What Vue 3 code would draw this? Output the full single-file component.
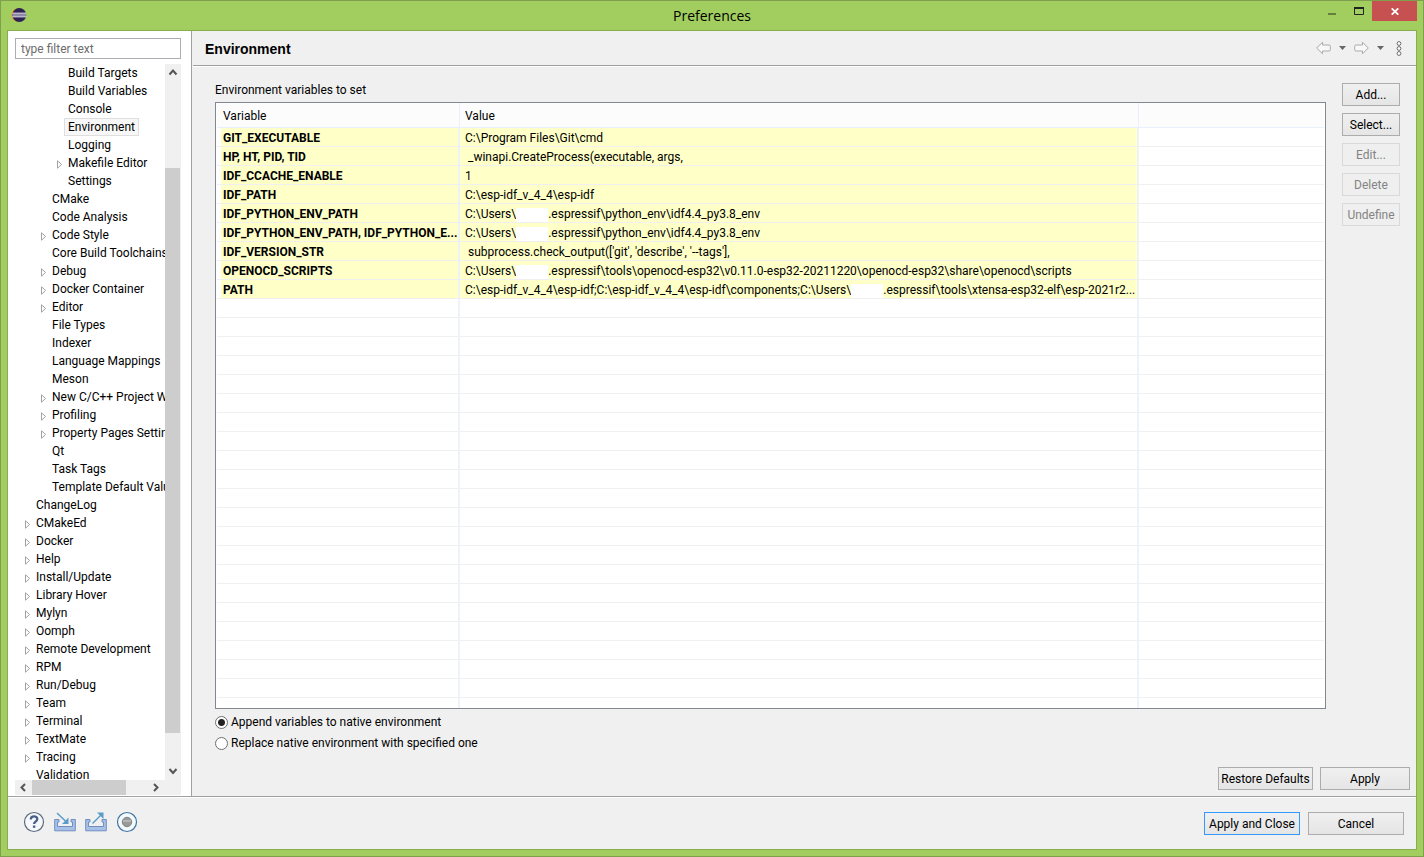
<script setup>
import { ref } from 'vue'

const filter = ref('')
const mode = ref('append')

// [label, level, expandable]
const tree = [
  ['Build Targets', 3], ['Build Variables', 3], ['Console', 3], ['Environment', 3],
  ['Logging', 3], ['Makefile Editor', 3, true], ['Settings', 3],
  ['CMake', 2], ['Code Analysis', 2], ['Code Style', 2, true], ['Core Build Toolchains', 2],
  ['Debug', 2, true], ['Docker Container', 2, true], ['Editor', 2, true], ['File Types', 2],
  ['Indexer', 2], ['Language Mappings', 2], ['Meson', 2], ['New C/C++ Project Wizard', 2, true],
  ['Profiling', 2, true], ['Property Pages Settings', 2, true], ['Qt', 2], ['Task Tags', 2],
  ['Template Default Values', 2], ['ChangeLog', 1], ['CMakeEd', 1, true], ['Docker', 1, true],
  ['Help', 1, true], ['Install/Update', 1, true], ['Library Hover', 1, true], ['Mylyn', 1, true],
  ['Oomph', 1, true], ['Remote Development', 1, true], ['RPM', 1, true], ['Run/Debug', 1, true],
  ['Team', 1, true], ['Terminal', 1, true], ['TextMate', 1, true], ['Tracing', 1, true],
  ['Validation', 1],
].map(([label, level, open]) => ({ label, level, open }))

// A value with a second part has a blanked-out name between the two.
const rows = [
  { name: 'GIT_EXECUTABLE', value: ['C:\\Program Files\\Git\\cmd'] },
  { name: 'HP, HT, PID, TID', value: [' _winapi.CreateProcess(executable, args,'] },
  { name: 'IDF_CCACHE_ENABLE', value: ['1'] },
  { name: 'IDF_PATH', value: ['C:\\esp-idf_v_4_4\\esp-idf'] },
  { name: 'IDF_PYTHON_ENV_PATH', value: ['C:\\Users\\', '.espressif\\python_env\\idf4.4_py3.8_env'] },
  { name: 'IDF_PYTHON_ENV_PATH, IDF_PYTHON_E...', value: ['C:\\Users\\', '.espressif\\python_env\\idf4.4_py3.8_env'] },
  { name: 'IDF_VERSION_STR', value: [" subprocess.check_output(['git', 'describe', '--tags'],"] },
  { name: 'OPENOCD_SCRIPTS', value: ['C:\\Users\\', '.espressif\\tools\\openocd-esp32\\v0.11.0-esp32-20211220\\openocd-esp32\\share\\openocd\\scripts'] },
  { name: 'PATH', value: ['C:\\esp-idf_v_4_4\\esp-idf;C:\\esp-idf_v_4_4\\esp-idf\\components;C:\\Users\\', '.espressif\\tools\\xtensa-esp32-elf\\esp-2021r2...'] },
]
const actions = [
  { label: 'Add...' }, { label: 'Select...' },
  { label: 'Edit...', off: true }, { label: 'Delete', off: true }, { label: 'Undefine', off: true },
]
</script>

<template>
  <div class="window">
    <header class="titlebar">
      <svg class="logo" width="16" height="16" viewBox="0 0 16 16">
        <circle cx="7" cy="8" r="6.6" fill="#f7941e" />
        <circle cx="8.3" cy="8" r="6.9" fill="#2c2255" />
        <path d="M1.6 6.2h13.4M1.4 9.8h13.8" stroke="#fff" stroke-width="1" />
        <path d="M1.4 8h13.8" stroke="#8f8aa8" stroke-width="2.2" />
      </svg>
      <h1>Preferences</h1>
      <div class="controls">
        <button class="min" aria-label="Minimize"><svg width="8" height="2"><rect width="8" height="2" fill="#66803c" /></svg></button>
        <button class="max" aria-label="Maximize"><svg width="10" height="8"><path d="M.5 1h9M.5 1v6.5h9V1M.5 0v2M9.5 0v2" fill="none" stroke="#222" /><rect width="10" height="2" fill="#222" /></svg></button>
        <button class="close" aria-label="Close"><svg width="8" height="7"><path d="M.7.3l6.6 6.4M7.3.3L.7 6.7" stroke="#fff" stroke-width="1.7" /></svg></button>
      </div>
    </header>

    <main class="client">
      <div class="body">
        <aside class="side">
          <input v-model="filter" class="filter" type="text" placeholder="type filter text" aria-label="Filter" />
          <div class="treebox">
            <ul class="tree">
              <li v-for="n in tree" :key="n.label" :class="['l' + n.level, { sel: n.label === 'Environment' }]">
                <span class="twist"><svg v-if="n.open" width="6" height="9" viewBox="0 0 6 9"><path d="M.5.8v7.4L4.6 4.5z" fill="#fff" stroke="#a3a3a3" /></svg></span>
                <span class="name">{{ n.label }}</span>
              </li>
            </ul>
            <div class="vbar">
              <svg width="16" height="17"><path d="M4.500 10.500l3.500-4 3.500 4" fill="none" stroke="#555" stroke-width="2" /></svg>
              <div class="vtrack"><i></i></div>
              <svg width="16" height="17"><path d="M4.500 6l3.500 4 3.500-4" fill="none" stroke="#555" stroke-width="2" /></svg>
            </div>
            <div class="hbar">
              <svg width="17" height="15"><path d="M10 4L6.500 7.500l3.500 3.500" fill="none" stroke="#555" stroke-width="2" /></svg>
              <div class="htrack"><i></i></div>
              <svg width="17" height="15"><path d="M6 4l3.500 3.500L6 11" fill="none" stroke="#555" stroke-width="2" /></svg>
            </div>
          </div>
        </aside>

        <section class="page">
          <div class="head">
            <h2>Environment</h2>
            <div class="nav">
              <button aria-label="Back"><svg width="15" height="14" viewBox="0 0 15 14"><path d="M.7 7L6.500 1.200V4h6.500q1.300 0 1.300 1.300v3.400q0 1.300-1.300 1.300H6.500v2.800z" fill="#f8f8f8" stroke="#aaa" /></svg></button>
              <button aria-label="Back history"><svg width="7" height="4"><path d="M0 0h7L3.500 4z" fill="#666" /></svg></button>
              <button aria-label="Forward"><svg width="15" height="14" viewBox="0 0 15 14"><path d="M14.300 7L8.500 1.200V4H2Q.7 4 .7 5.300v3.400Q.7 10 2 10h6.500v2.800z" fill="#f8f8f8" stroke="#aaa" /></svg></button>
              <button aria-label="Forward history"><svg width="7" height="4"><path d="M0 0h7L3.500 4z" fill="#666" /></svg></button>
              <button aria-label="View menu"><svg width="6" height="15" viewBox="0 0 6 15"><g fill="#fff" stroke="#6a6a6a"><circle cx="3" cy="2.500" r="1.900" /><circle cx="3" cy="7.500" r="1.900" /><circle cx="3" cy="12.500" r="1.900" /></g></svg></button>
            </div>
          </div>

          <div class="content">
            <p class="caption">Environment variables to set</p>
            <div class="work">
              <div class="grid">
                <table>
                  <colgroup><col class="c1" /><col class="c2" /><col /></colgroup>
                  <thead><tr><th>Variable</th><th>Value</th><th></th></tr></thead>
                  <tbody>
                    <tr v-for="r in rows" :key="r.name" class="set">
                      <td>{{ r.name }}</td>
                      <td>{{ r.value[0] }}<template v-if="r.value[1]"><i class="blank"></i>{{ r.value[1] }}</template></td>
                      <td></td>
                    </tr>
                    <tr v-for="n in 22" :key="n"><td></td><td></td><td></td></tr>
                  </tbody>
                </table>
              </div>
              <div class="actions">
                <button v-for="a in actions" :key="a.label" class="btn" :disabled="a.off">{{ a.label }}</button>
              </div>
            </div>
            <div class="radios">
              <label><input v-model="mode" type="radio" name="mode" value="append" />Append variables to native environment</label>
              <label><input v-model="mode" type="radio" name="mode" value="replace" />Replace native environment with specified one</label>
            </div>
            <div class="apply">
              <button class="btn restore">Restore Defaults</button>
              <button class="btn single">Apply</button>
            </div>
          </div>
        </section>
      </div>

      <footer class="foot">
        <div class="tools">
          <button aria-label="Help"><svg width="22" height="22" viewBox="0 0 22 22"><circle cx="11" cy="11" r="9.500" fill="#f6f8fb" stroke="#5d6b80" stroke-width="1.200" /><path d="M7.800 8.500C7.800 4.300 14.300 4.500 14.300 8c0 2.600-3.200 2.700-3.200 5" fill="none" stroke="#4a5f88" stroke-width="2.300" /><rect x="9.900" y="14.500" width="2.400" height="2.300" fill="#4a5f88" /></svg></button>
          <button aria-label="Import"><svg width="22" height="22" viewBox="0 0 22 22"><path d="M5 8.500H.700v11.300h20.600V8.500H17v2.500h1.500v4.500h-15V11H5z" fill="#a9c0e6" stroke="#6f8fc4" /><path d="M3 2l10 9.500" stroke="#5a9bc8" stroke-width="1.500" /><path d="M14.500 6.500v6.500H8z" fill="#5a9bc8" /></svg></button>
          <button aria-label="Export"><svg width="22" height="22" viewBox="0 0 22 22"><path d="M5 8.500H.700v11.300h20.600V8.500H17v2.500h1.500v4.500h-15V11H5z" fill="#a9c0e6" stroke="#6f8fc4" /><path d="M7.500 12.500L17 3" stroke="#5a9bc8" stroke-width="1.500" /><path d="M12 1.500h6.500V8z" fill="#5a9bc8" /></svg></button>
          <button aria-label="Record preferences"><svg width="22" height="22" viewBox="0 0 22 22"><circle cx="11" cy="11" r="9.500" fill="#f3fafd" stroke="#3f74a3" stroke-width="1.200" /><circle cx="11" cy="11" r="4.700" fill="#999" stroke="#808080" /><path d="M7 10h8" stroke="#b5b5b5" stroke-width="2" /></svg></button>
        </div>
        <button class="btn primary">Apply and Close</button>
        <button class="btn cancel">Cancel</button>
      </footer>
    </main>
  </div>
</template>

<style>
body { margin: 0; }
</style>

<style scoped>
* { box-sizing: border-box; }
.window { height: 100vh; display: flex; flex-direction: column; padding: 0 6px 6px; background: #a2ce5f; border: 1px solid #7f9f4c; font: 12px/18px Roboto, "Open Sans", sans-serif; color: #000; }
button { font: inherit; padding: 0; border: 0; background: none; }
svg { display: block; }
h1, h2, p, ul { margin: 0; padding: 0; }

.titlebar { height: 29px; flex: none; display: grid; grid-template-columns: 110px 1fr 110px; }
.logo { margin: 6px 0 0 4px; }
h1 { text-align: center; font: 400 14px/29px "Open Sans", sans-serif; }
.controls { display: flex; justify-content: flex-end; }
.controls button { display: flex; justify-content: center; height: 20px; }
.min { width: 27px; padding-top: 12px; }
.max { width: 27px; padding-top: 6px; }
.close { width: 45px; align-items: center; background: #c75050; }

.client { flex: 1; min-height: 0; display: flex; flex-direction: column; border: 1px solid #88ad4f; background: #f0f0f0; }
.body { flex: 1; min-height: 0; display: flex; border-bottom: 1px solid #a0a0a0; }
.side { width: 184px; flex: none; display: flex; flex-direction: column; padding: 7px 10px 1px 7px; background: #fff; border-right: 1px solid #a0a0a0; }
.filter { width: 100%; height: 21px; flex: none; font: inherit; padding: 0 5px; border: 1px solid #abadb3; background: #fff; outline: 0; }
.filter::placeholder { color: #6d6d6d; opacity: 1; }
.treebox { flex: 1; min-height: 0; margin-top: 5px; display: grid; grid-template: minmax(0, 1fr) 15px / minmax(0, 1fr) 16px; background: #f0f0f0; }
.tree { overflow: hidden; list-style: none; background: #fff; white-space: nowrap; }
.tree li { height: 18px; display: flex; align-items: center; }
.l1 { padding-left: 10px; }
.l2 { padding-left: 26px; }
.l3 { padding-left: 42px; }
.twist { width: 7px; flex: none; padding-top: 2px; }
.name { padding: 0 3px; line-height: 16px; border: 1px solid transparent; }
.sel .name { background: #f7f7f7; border-color: #dedede; }
.vbar { display: flex; flex-direction: column; }
.vtrack { flex: 1; display: flex; flex-direction: column; padding: 87px 0 0; }
.vtrack i { height: 95%; width: 15px; background: #cdcdcd; }
.hbar { display: flex; }
.htrack { flex: 1; }
.htrack i { display: block; height: 15px; width: 81%; background: #cdcdcd; }

.page { flex: 1; min-width: 0; display: flex; flex-direction: column; margin-left: 1px; }
.head { height: 35px; flex: none; display: flex; align-items: center; justify-content: space-between; padding: 2px 14px 0 12px; border-bottom: 1px solid #a0a0a0; box-shadow: 0 1px #fff; }
h2 { font: bold 14px/18px "Liberation Sans", Arial, sans-serif; }
.nav { display: flex; align-items: center; gap: 8px; padding-bottom: 2px; }
.nav button:last-child { margin-left: 4px; }
.content { flex: 1; min-height: 0; display: flex; flex-direction: column; padding: 15px 6px 6px 22px; }
.caption { height: 21px; flex: none; }
.work { flex: 1; min-height: 0; display: flex; gap: 16px; padding-right: 10px; }
.grid { flex: 1; min-width: 0; overflow: hidden; padding: 0 1px; background: #fff; border: 1px solid #828790; }
table { width: 100%; table-layout: fixed; border-collapse: separate; border-spacing: 0; }
.c1 { width: 243px; }
.c2 { width: 679px; }
th { height: 25px; padding: 1px 5px 0; text-align: left; font-weight: 400; background: #fcfcfc; border-bottom: 1px solid #e8f1fb; border-right: 1px solid #e8f1fb; }
td { height: 19px; padding: 2px 0 0 5px; line-height: 16px; white-space: pre; overflow: hidden; border-bottom: 1px solid #f0f0f0; border-right: 2px solid #eef2fa; }
th:last-child, td:last-child { border-right: 0; }
th:first-child, td:first-child { padding-left: 6px; }
.set td { background: #ffffc8; }
.set td:first-child { font-weight: 700; box-shadow: inset 4px 0 #fff; }
.set td:last-child { background: none; }
.blank { display: inline-block; width: 32px; height: 14px; vertical-align: middle; background: #fff; }
.actions { width: 58px; margin-top: -19px; display: flex; flex-direction: column; gap: 7px; }
.btn { height: 23px; border: 1px solid #acacac; background: linear-gradient(#f0f0f0, #e5e5e5); text-align: center; white-space: nowrap; }
.btn:disabled { color: #838383; border-color: #d9d9d9; background: #efefef; }
.radios { display: flex; flex-direction: column; gap: 3px; padding-top: 4px; }
.radios label { display: flex; align-items: center; gap: 3px; align-self: flex-start; }
.radios input { appearance: none; width: 13px; height: 13px; margin: 0; border: 1px solid #707070; border-radius: 50%; background: #fff; }
.radios input:checked { background: radial-gradient(circle, #222 3px, #fff 4px); }
.apply { display: flex; justify-content: flex-end; gap: 7px; margin-top: 15px; }
.restore { width: 95px; }
.single { width: 90px; }

.foot { height: 52px; flex: none; display: flex; align-items: center; gap: 8px; padding: 0 12px 0 15px; border-top: 1px solid #fff; }
.tools { flex: 1; display: flex; gap: 9px; padding-bottom: 4px; }
.primary { width: 96px; border-color: #3399ff; }
.cancel { width: 96px; }
</style>
